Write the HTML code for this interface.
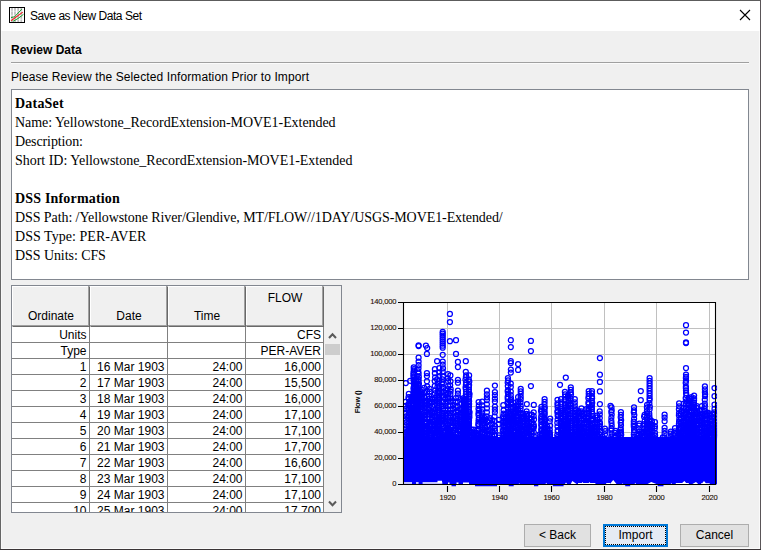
<!DOCTYPE html>
<html><head><meta charset="utf-8"><title>Save as New Data Set</title>
<style>
html,body{margin:0;padding:0;}
body{width:761px;height:550px;overflow:hidden;background:#f0f0f0;position:relative;font-family:"Liberation Sans",sans-serif;font-size:12px;color:#000;}
.abs{position:absolute;}
#win{left:0;top:0;width:761px;height:550px;box-sizing:border-box;}
#bt{left:0;top:0;width:761px;height:1px;background:#5c5c5c;}
#bl{left:0;top:0;width:1px;height:549px;background:#666;}
#wl{left:1px;top:31px;width:1px;height:517px;background:#f8f8f8;}
#wr{left:759px;top:31px;width:1px;height:518px;background:#fafafa;}
#wb{left:1px;top:548px;width:759px;height:1px;background:#fafafa;}
#br{left:760px;top:0;width:1px;height:550px;background:#5a5558;}
#bb{left:0;top:549px;width:761px;height:1px;background:#3a3436;}
#title{left:1px;top:1px;width:759px;height:30px;background:#fff;}
#ttext{left:30px;top:9px;font-size:12px;letter-spacing:-0.46px;line-height:14px;white-space:nowrap;}
#hdr{left:11px;top:43px;font-weight:bold;line-height:14px;white-space:nowrap;}
#sep{left:11px;top:62px;width:738px;height:1px;background:#a0a0a0;border-bottom:1px solid #fbfbfb;}
#sub{left:11px;top:70px;letter-spacing:0.11px;line-height:14px;white-space:nowrap;}
#info{left:11px;top:89px;width:738px;height:191px;box-sizing:border-box;border:1px solid #828790;background:#fff;font-family:"Liberation Serif",serif;font-size:14px;line-height:19px;padding:4px 0 0 3px;white-space:nowrap;}
#info b{font-weight:bold;}
.btn{top:524px;height:23px;box-sizing:border-box;border:1px solid #adadad;background:#e1e1e1;text-align:center;line-height:21px;font-size:12px;}
</style></head><body>
<div id="title" class="abs"></div>
<div id="wl" class="abs"></div><div id="wr" class="abs"></div><div id="wb" class="abs"></div><div id="bt" class="abs"></div><div id="bl" class="abs"></div><div id="br" class="abs"></div><div id="bb" class="abs"></div>
<svg class="abs" style="left:9px;top:7px" width="16" height="16" viewBox="0 0 16 16">
<rect x="0.5" y="0.5" width="15" height="15" fill="#fff" stroke="#000" stroke-width="1"/>
<path d="M3 1v14M6 1v14M9.2 1v14M12.3 1v14" stroke="#bdbdbd" stroke-width="1.7" fill="none"/>
<path d="M1 4.2h14M1 8.3h14M1 12.2h14" stroke="#fff" stroke-opacity="0.65" stroke-width="0.9" fill="none"/>
<path d="M2 10.6 L5.5 9.8 L12.8 2.2" stroke="#1a9a2a" stroke-width="1" fill="none"/>
<path d="M4 14.3 L9 11.5 L14.5 7.3" stroke="#1a9a2a" stroke-width="1" fill="none"/>
<path d="M2 13.8 L13.8 5.1" stroke="#f02020" stroke-width="1.1" fill="none"/>
</svg>
<div id="ttext" class="abs">Save as New Data Set</div>
<svg class="abs" style="left:739px;top:9px" width="12" height="12" viewBox="0 0 12 12"><path d="M1 1L11 11M11 1L1 11" stroke="#000" stroke-width="1.1" fill="none"/></svg>
<div id="hdr" class="abs">Review Data</div>
<div id="sep" class="abs"></div>
<div id="sub" class="abs">Please Review the Selected Information Prior to Import</div>
<div id="info" class="abs"><span style="letter-spacing:0.21px"><b>DataSet</b></span><br><span style="letter-spacing:-0.0625px">Name: Yellowstone_RecordExtension-MOVE1-Extended</span><br><span style="letter-spacing:-0.11px">Description:</span><br><span style="letter-spacing:-0.023px">Short ID: Yellowstone_RecordExtension-MOVE1-Extended</span><br><br><span style="letter-spacing:0.18px"><b>DSS Information</b></span><br><span style="letter-spacing:-0.086px">DSS Path: /Yellowstone River/Glendive, MT/FLOW//1DAY/USGS-MOVE1-Extended/</span><br><span style="letter-spacing:0.04px">DSS Type: PER-AVER</span><br><span style="letter-spacing:-0.07px">DSS Units: CFS</span><br></div>
<div class="abs" id="tbl" style="left:11px;top:285px;width:331px;height:228px;box-sizing:border-box;border:1px solid #828790;background:#f0f0f0;overflow:hidden;">
<div class="abs" style="left:0px;top:0;width:78px;height:41px;box-sizing:border-box;border-top:1px solid #fff;border-left:1px solid #fff;border-right:1px solid #696969;border-bottom:1px solid #696969;background:#f0f0f0;"><div class="abs" style="left:-1px;top:-1px;right:0;bottom:0;border-right:1px solid #a0a0a0;border-bottom:1px solid #a0a0a0;"></div><div class="abs" style="left:0;right:0;top:4px;text-align:center;line-height:14px;"></div><div class="abs" style="left:0;right:0;top:22px;text-align:center;line-height:14px;">Ordinate</div></div>
<div class="abs" style="left:78px;top:0;width:78px;height:41px;box-sizing:border-box;border-top:1px solid #fff;border-left:1px solid #fff;border-right:1px solid #696969;border-bottom:1px solid #696969;background:#f0f0f0;"><div class="abs" style="left:-1px;top:-1px;right:0;bottom:0;border-right:1px solid #a0a0a0;border-bottom:1px solid #a0a0a0;"></div><div class="abs" style="left:0;right:0;top:4px;text-align:center;line-height:14px;"></div><div class="abs" style="left:0;right:0;top:22px;text-align:center;line-height:14px;">Date</div></div>
<div class="abs" style="left:156px;top:0;width:78px;height:41px;box-sizing:border-box;border-top:1px solid #fff;border-left:1px solid #fff;border-right:1px solid #696969;border-bottom:1px solid #696969;background:#f0f0f0;"><div class="abs" style="left:-1px;top:-1px;right:0;bottom:0;border-right:1px solid #a0a0a0;border-bottom:1px solid #a0a0a0;"></div><div class="abs" style="left:0;right:0;top:4px;text-align:center;line-height:14px;"></div><div class="abs" style="left:0;right:0;top:22px;text-align:center;line-height:14px;">Time</div></div>
<div class="abs" style="left:234px;top:0;width:78px;height:41px;box-sizing:border-box;border-top:1px solid #fff;border-left:1px solid #fff;border-right:1px solid #696969;border-bottom:1px solid #696969;background:#f0f0f0;"><div class="abs" style="left:-1px;top:-1px;right:0;bottom:0;border-right:1px solid #a0a0a0;border-bottom:1px solid #a0a0a0;"></div><div class="abs" style="left:0;right:0;top:4px;text-align:center;line-height:14px;">FLOW</div><div class="abs" style="left:0;right:0;top:22px;text-align:center;line-height:14px;"></div></div>
<div class="abs" style="left:0;top:41px;width:312px;height:190px;background:#fff;"></div>
<div class="abs" style="left:0px;top:41px;width:78px;height:16px;box-sizing:border-box;border-right:1px solid #808080;border-bottom:1px solid #808080;text-align:right;padding-right:2.5px;line-height:16px;white-space:nowrap;">Units</div>
<div class="abs" style="left:78px;top:41px;width:78px;height:16px;box-sizing:border-box;border-right:1px solid #808080;border-bottom:1px solid #808080;text-align:right;padding-right:2.5px;line-height:16px;white-space:nowrap;"></div>
<div class="abs" style="left:156px;top:41px;width:78px;height:16px;box-sizing:border-box;border-right:1px solid #808080;border-bottom:1px solid #808080;text-align:right;padding-right:2.5px;line-height:16px;white-space:nowrap;"></div>
<div class="abs" style="left:234px;top:41px;width:78px;height:16px;box-sizing:border-box;border-right:1px solid #808080;border-bottom:1px solid #808080;text-align:right;padding-right:2px;line-height:16px;white-space:nowrap;">CFS</div>
<div class="abs" style="left:0px;top:57px;width:78px;height:16px;box-sizing:border-box;border-right:1px solid #808080;border-bottom:1px solid #808080;text-align:right;padding-right:2.5px;line-height:16px;white-space:nowrap;">Type</div>
<div class="abs" style="left:78px;top:57px;width:78px;height:16px;box-sizing:border-box;border-right:1px solid #808080;border-bottom:1px solid #808080;text-align:right;padding-right:2.5px;line-height:16px;white-space:nowrap;"></div>
<div class="abs" style="left:156px;top:57px;width:78px;height:16px;box-sizing:border-box;border-right:1px solid #808080;border-bottom:1px solid #808080;text-align:right;padding-right:2.5px;line-height:16px;white-space:nowrap;"></div>
<div class="abs" style="left:234px;top:57px;width:78px;height:16px;box-sizing:border-box;border-right:1px solid #808080;border-bottom:1px solid #808080;text-align:right;padding-right:2px;line-height:16px;white-space:nowrap;">PER-AVER</div>
<div class="abs" style="left:0px;top:73px;width:78px;height:16px;box-sizing:border-box;border-right:1px solid #808080;border-bottom:1px solid #808080;text-align:right;padding-right:2.5px;line-height:16px;white-space:nowrap;">1</div>
<div class="abs" style="left:78px;top:73px;width:78px;height:16px;box-sizing:border-box;border-right:1px solid #808080;border-bottom:1px solid #808080;text-align:right;padding-right:2.5px;line-height:16px;white-space:nowrap;">16 Mar 1903</div>
<div class="abs" style="left:156px;top:73px;width:78px;height:16px;box-sizing:border-box;border-right:1px solid #808080;border-bottom:1px solid #808080;text-align:right;padding-right:2.5px;line-height:16px;white-space:nowrap;">24:00</div>
<div class="abs" style="left:234px;top:73px;width:78px;height:16px;box-sizing:border-box;border-right:1px solid #808080;border-bottom:1px solid #808080;text-align:right;padding-right:2px;line-height:16px;white-space:nowrap;">16,000</div>
<div class="abs" style="left:0px;top:89px;width:78px;height:16px;box-sizing:border-box;border-right:1px solid #808080;border-bottom:1px solid #808080;text-align:right;padding-right:2.5px;line-height:16px;white-space:nowrap;">2</div>
<div class="abs" style="left:78px;top:89px;width:78px;height:16px;box-sizing:border-box;border-right:1px solid #808080;border-bottom:1px solid #808080;text-align:right;padding-right:2.5px;line-height:16px;white-space:nowrap;">17 Mar 1903</div>
<div class="abs" style="left:156px;top:89px;width:78px;height:16px;box-sizing:border-box;border-right:1px solid #808080;border-bottom:1px solid #808080;text-align:right;padding-right:2.5px;line-height:16px;white-space:nowrap;">24:00</div>
<div class="abs" style="left:234px;top:89px;width:78px;height:16px;box-sizing:border-box;border-right:1px solid #808080;border-bottom:1px solid #808080;text-align:right;padding-right:2px;line-height:16px;white-space:nowrap;">15,500</div>
<div class="abs" style="left:0px;top:105px;width:78px;height:16px;box-sizing:border-box;border-right:1px solid #808080;border-bottom:1px solid #808080;text-align:right;padding-right:2.5px;line-height:16px;white-space:nowrap;">3</div>
<div class="abs" style="left:78px;top:105px;width:78px;height:16px;box-sizing:border-box;border-right:1px solid #808080;border-bottom:1px solid #808080;text-align:right;padding-right:2.5px;line-height:16px;white-space:nowrap;">18 Mar 1903</div>
<div class="abs" style="left:156px;top:105px;width:78px;height:16px;box-sizing:border-box;border-right:1px solid #808080;border-bottom:1px solid #808080;text-align:right;padding-right:2.5px;line-height:16px;white-space:nowrap;">24:00</div>
<div class="abs" style="left:234px;top:105px;width:78px;height:16px;box-sizing:border-box;border-right:1px solid #808080;border-bottom:1px solid #808080;text-align:right;padding-right:2px;line-height:16px;white-space:nowrap;">16,000</div>
<div class="abs" style="left:0px;top:121px;width:78px;height:16px;box-sizing:border-box;border-right:1px solid #808080;border-bottom:1px solid #808080;text-align:right;padding-right:2.5px;line-height:16px;white-space:nowrap;">4</div>
<div class="abs" style="left:78px;top:121px;width:78px;height:16px;box-sizing:border-box;border-right:1px solid #808080;border-bottom:1px solid #808080;text-align:right;padding-right:2.5px;line-height:16px;white-space:nowrap;">19 Mar 1903</div>
<div class="abs" style="left:156px;top:121px;width:78px;height:16px;box-sizing:border-box;border-right:1px solid #808080;border-bottom:1px solid #808080;text-align:right;padding-right:2.5px;line-height:16px;white-space:nowrap;">24:00</div>
<div class="abs" style="left:234px;top:121px;width:78px;height:16px;box-sizing:border-box;border-right:1px solid #808080;border-bottom:1px solid #808080;text-align:right;padding-right:2px;line-height:16px;white-space:nowrap;">17,100</div>
<div class="abs" style="left:0px;top:137px;width:78px;height:16px;box-sizing:border-box;border-right:1px solid #808080;border-bottom:1px solid #808080;text-align:right;padding-right:2.5px;line-height:16px;white-space:nowrap;">5</div>
<div class="abs" style="left:78px;top:137px;width:78px;height:16px;box-sizing:border-box;border-right:1px solid #808080;border-bottom:1px solid #808080;text-align:right;padding-right:2.5px;line-height:16px;white-space:nowrap;">20 Mar 1903</div>
<div class="abs" style="left:156px;top:137px;width:78px;height:16px;box-sizing:border-box;border-right:1px solid #808080;border-bottom:1px solid #808080;text-align:right;padding-right:2.5px;line-height:16px;white-space:nowrap;">24:00</div>
<div class="abs" style="left:234px;top:137px;width:78px;height:16px;box-sizing:border-box;border-right:1px solid #808080;border-bottom:1px solid #808080;text-align:right;padding-right:2px;line-height:16px;white-space:nowrap;">17,100</div>
<div class="abs" style="left:0px;top:153px;width:78px;height:16px;box-sizing:border-box;border-right:1px solid #808080;border-bottom:1px solid #808080;text-align:right;padding-right:2.5px;line-height:16px;white-space:nowrap;">6</div>
<div class="abs" style="left:78px;top:153px;width:78px;height:16px;box-sizing:border-box;border-right:1px solid #808080;border-bottom:1px solid #808080;text-align:right;padding-right:2.5px;line-height:16px;white-space:nowrap;">21 Mar 1903</div>
<div class="abs" style="left:156px;top:153px;width:78px;height:16px;box-sizing:border-box;border-right:1px solid #808080;border-bottom:1px solid #808080;text-align:right;padding-right:2.5px;line-height:16px;white-space:nowrap;">24:00</div>
<div class="abs" style="left:234px;top:153px;width:78px;height:16px;box-sizing:border-box;border-right:1px solid #808080;border-bottom:1px solid #808080;text-align:right;padding-right:2px;line-height:16px;white-space:nowrap;">17,700</div>
<div class="abs" style="left:0px;top:169px;width:78px;height:16px;box-sizing:border-box;border-right:1px solid #808080;border-bottom:1px solid #808080;text-align:right;padding-right:2.5px;line-height:16px;white-space:nowrap;">7</div>
<div class="abs" style="left:78px;top:169px;width:78px;height:16px;box-sizing:border-box;border-right:1px solid #808080;border-bottom:1px solid #808080;text-align:right;padding-right:2.5px;line-height:16px;white-space:nowrap;">22 Mar 1903</div>
<div class="abs" style="left:156px;top:169px;width:78px;height:16px;box-sizing:border-box;border-right:1px solid #808080;border-bottom:1px solid #808080;text-align:right;padding-right:2.5px;line-height:16px;white-space:nowrap;">24:00</div>
<div class="abs" style="left:234px;top:169px;width:78px;height:16px;box-sizing:border-box;border-right:1px solid #808080;border-bottom:1px solid #808080;text-align:right;padding-right:2px;line-height:16px;white-space:nowrap;">16,600</div>
<div class="abs" style="left:0px;top:185px;width:78px;height:16px;box-sizing:border-box;border-right:1px solid #808080;border-bottom:1px solid #808080;text-align:right;padding-right:2.5px;line-height:16px;white-space:nowrap;">8</div>
<div class="abs" style="left:78px;top:185px;width:78px;height:16px;box-sizing:border-box;border-right:1px solid #808080;border-bottom:1px solid #808080;text-align:right;padding-right:2.5px;line-height:16px;white-space:nowrap;">23 Mar 1903</div>
<div class="abs" style="left:156px;top:185px;width:78px;height:16px;box-sizing:border-box;border-right:1px solid #808080;border-bottom:1px solid #808080;text-align:right;padding-right:2.5px;line-height:16px;white-space:nowrap;">24:00</div>
<div class="abs" style="left:234px;top:185px;width:78px;height:16px;box-sizing:border-box;border-right:1px solid #808080;border-bottom:1px solid #808080;text-align:right;padding-right:2px;line-height:16px;white-space:nowrap;">17,100</div>
<div class="abs" style="left:0px;top:201px;width:78px;height:16px;box-sizing:border-box;border-right:1px solid #808080;border-bottom:1px solid #808080;text-align:right;padding-right:2.5px;line-height:16px;white-space:nowrap;">9</div>
<div class="abs" style="left:78px;top:201px;width:78px;height:16px;box-sizing:border-box;border-right:1px solid #808080;border-bottom:1px solid #808080;text-align:right;padding-right:2.5px;line-height:16px;white-space:nowrap;">24 Mar 1903</div>
<div class="abs" style="left:156px;top:201px;width:78px;height:16px;box-sizing:border-box;border-right:1px solid #808080;border-bottom:1px solid #808080;text-align:right;padding-right:2.5px;line-height:16px;white-space:nowrap;">24:00</div>
<div class="abs" style="left:234px;top:201px;width:78px;height:16px;box-sizing:border-box;border-right:1px solid #808080;border-bottom:1px solid #808080;text-align:right;padding-right:2px;line-height:16px;white-space:nowrap;">17,100</div>
<div class="abs" style="left:0px;top:217px;width:78px;height:16px;box-sizing:border-box;border-right:1px solid #808080;border-bottom:1px solid #808080;text-align:right;padding-right:2.5px;line-height:16px;white-space:nowrap;">10</div>
<div class="abs" style="left:78px;top:217px;width:78px;height:16px;box-sizing:border-box;border-right:1px solid #808080;border-bottom:1px solid #808080;text-align:right;padding-right:2.5px;line-height:16px;white-space:nowrap;">25 Mar 1903</div>
<div class="abs" style="left:156px;top:217px;width:78px;height:16px;box-sizing:border-box;border-right:1px solid #808080;border-bottom:1px solid #808080;text-align:right;padding-right:2.5px;line-height:16px;white-space:nowrap;">24:00</div>
<div class="abs" style="left:234px;top:217px;width:78px;height:16px;box-sizing:border-box;border-right:1px solid #808080;border-bottom:1px solid #808080;text-align:right;padding-right:2px;line-height:16px;white-space:nowrap;">17,700</div>
<div class="abs" style="left:312px;top:41px;width:17px;height:190px;background:#f0f0f0;"></div>
<div class="abs" style="left:313px;top:58px;width:15px;height:11px;background:#cdcdcd;"></div>
<svg class="abs" style="left:312px;top:41px" width="17" height="17" viewBox="0 0 17 17"><path d="M5 11L8.5 7.2L12 11" stroke="#5a5a5a" stroke-width="2" fill="none"/></svg>
<svg class="abs" style="left:312px;top:209px" width="17" height="17" viewBox="0 0 17 17"><path d="M5 6.5L8.5 10.3L12 6.5" stroke="#5a5a5a" stroke-width="2" fill="none"/></svg>
</div>
<svg class="abs" style="left:345px;top:290px" width="410" height="225" viewBox="345 290 410 225" font-family="Liberation Sans, sans-serif">
<defs><marker id="m" markerWidth="6" markerHeight="6" refX="3" refY="3" markerUnits="userSpaceOnUse" overflow="visible"><circle cx="3" cy="3" r="2.5" fill="none" stroke="#0000ff" stroke-width="1.25"/></marker><clipPath id="cp"><rect x="403.5" y="302.5" width="313.6" height="184"/></clipPath></defs>
<rect x="403.5" y="302.5" width="312" height="182" fill="#fff" stroke="none"/>
<path d="M404 328.5H715M404 354.5H715M404 380.5H715M404 406.5H715M404 432.5H715M404 458.5H715M447.5 303V484M499.5 303V484M551.5 303V484M604.5 303V484M656.5 303V484M709.5 303V484" stroke="#c0c0c0" stroke-width="1" fill="none"/>
<g clip-path="url(#cp)">
<rect x="404" y="437" width="313" height="47.3" fill="#0000ff"/>
<path d="M518.8 484L519.2 482.8L519.6 484ZM545.5 484L546.2 482.8L547 484ZM565 484L566 482.6L567.2 484ZM570.8 484L572.3 480.9L576.6 484ZM578 484V482.9H595.4V484ZM581 484L582.5 482L584 484ZM588 484L589.5 482L591 484ZM606.2 484V483.1H610V484ZM610 484L613.2 480.1L616.5 484ZM622.3 484L622.7 483L623.2 484ZM634.6 484L635.3 482.8L636 484ZM647.6 484L651.2 482L656.3 484ZM670.7 484L671.3 482.9L672 484ZM675.8 484V483.1H688.8V484ZM681 484L684.4 480.9L687 484ZM692.4 484L696 482L698.2 484ZM701 484V483.2H709.7V484ZM701.5 484L704 480.9L706.5 484Z" fill="#fff"/>
<path d="M404 482.9H412M416 482.9H418.6M422.6 482.9H442.3M437.5 481.6H442M448 483.2H449.5M456.5 483.2H458.5M463 483.2H469" stroke="#fff" stroke-width="1.5"/>
<polyline points="405.8,383.1 410.2,380.8 413.7,367.3 413.9,369 413.8,370.5 413.5,372.7 413.5,374.5 413.5,376.3 413.8,377.3 413.6,379.8 413.9,381.1 413.8,383.8 414.1,385.5 414,386.5 413.6,387.9 413.7,389.1 413.6,391.5 413.9,393.3 413.8,394.7 413.5,395.6 413.9,396.8 413.7,398.3 413.8,400.1 414,401.4 413.6,403.4 413.8,405.2 413.9,407.5 414.1,408.8 413.8,409.8 413.6,411.8 413.5,413.5 414,415.4 414,417.2 413.9,418.5 413.8,420.3 414,421.9 413.8,424.3 413.5,426.2 413.9,428.2 414,430.7 413.7,432 413.5,433.9 413.6,435.5 413.5,436.5 413.6,438.6 418.6,345.3 418.6,346 418.6,357.7 418.6,361.6 418.6,365.2 418.5,368.3 418.3,371.4 418.6,373.7 418.8,376.9 418.5,379.4 418.5,381.1 418.9,383.7 418.4,384.9 418.4,386.2 418.7,388.1 418.3,389.5 418.5,391.2 418.9,393.1 418.6,395.4 418.7,397.4 418.8,398.3 418.8,400.4 418.5,402.6 418.4,404.1 418.3,406 418.4,406.9 418.5,407.9 418.3,408.8 418.4,409.9 418.3,411.3 418.7,413.6 418.5,414.6 418.5,416 418.8,417 418.6,419.5 418.4,421.2 418.5,422.1 418.8,423.4 418.3,424.5 418.6,426.9 418.6,427.9 418.6,428.8 418.8,431.2 418.5,433.2 418.4,434.6 418.6,436.8 418.5,438.9 425.9,345.6 427.2,348.1 426.9,353.9 426.9,373.2 426.9,376.1 426.9,381.3 427.1,386.3 427.1,391.7 427.1,396.5 426.7,401.1 426.8,404.1 426.6,405.7 426.8,407.9 427.2,411.5 427.2,414.3 427.2,418.7 426.7,421.3 426.7,423.4 427,425.5 427.1,429.7 427,432.6 426.7,436 427.1,439.1 434.9,369.2 434.9,373.2 435.1,377.3 434.7,381.1 434.8,385.8 435.2,390.6 434.8,393.3 435,397.6 434.7,399.6 435.1,401.5 434.7,405.3 435.2,409.3 434.8,412.7 434.7,415.8 435.2,417.3 434.9,420.7 434.9,425 435.1,428.7 434.8,430.5 434.7,432.6 434.8,435.5 434.7,437.9 437.1,361.2 439.3,368.1 439.2,372.3 439.4,376 439.3,381.1 439.3,386.3 439.3,389.4 439.3,390.9 439,392.9 439.1,396.7 439.4,399.6 439.2,402.7 439.3,405.8 439.1,409.6 439.1,412.7 439.5,415 439.3,418 439.5,421.3 439.4,423.8 439.3,426.5 439.3,429.6 439.3,432.4 439.4,436.2 442.7,331.9 442.7,333.7 442.7,335.6 442.7,337.5 442.7,339.5 442.7,341.5 442.7,343.5 442.7,345.7 442.7,347.7 442.7,354.8 442.7,361.6 442.7,364.5 443,368.3 442.7,371.4 442.9,376.6 442.5,379.3 442.4,382.1 442.4,384.3 442.9,387.7 442.5,391.9 442.8,395.5 442.9,397.4 442.5,401.8 442.6,406.1 443,409 442.5,413 442.7,415.8 442.5,418 442.8,420.1 442.7,421.4 442.4,423.9 442.8,426.1 442.4,428.8 442.9,432.7 442.5,436.7 442.4,438.7 449.9,313.9 449.9,322 449.9,341.2 448,374 447.9,378.3 448,381 448.2,386.1 447.8,389.2 448,393.4 447.8,397 448.1,398.6 447.7,401.3 448.1,405.6 447.8,409.5 447.7,413.5 448,417.6 448,420.1 447.9,424.3 448,426.2 447.8,428.1 447.7,429.8 447.9,431.6 448.2,433.8 448,435.8 447.9,437.6 447.9,438.9 450.4,375.4 450.5,381.3 450.2,385.3 450.7,389.1 450.6,391.6 450.4,394.4 450.3,398.4 450.5,401.4 450.3,405.8 450.5,409.8 450.3,413.1 450.1,415.6 450.1,417.5 450.3,421.1 450.2,423.1 450.6,427.1 450.3,430.2 450.3,432.1 450.2,434.7 450.3,437.1 456,340.2 456,353.9 457.9,361.9 457.9,367 457.9,379.8 457.9,382.7 457.9,390.7 457.9,393.6 458.2,397.3 457.7,401.3 457.8,406.6 457.6,410 457.9,412.6 457.7,415.6 457.6,418.5 457.7,420.8 457.6,423.4 457.8,425 458,427.1 458.1,430.1 458,433.6 457.8,437.7 465.8,361.2 465.8,371.8 466.1,375.3 465.9,377 465.5,379.7 466,382.8 465.9,384.8 465.6,387.3 465.8,389.2 466,391.7 465.9,394.1 465.9,396.7 465.6,399 465.6,399.9 465.6,401.5 465.8,404 465.9,406.1 465.8,408 466,408.8 465.8,410.9 465.9,412.6 465.9,413.5 465.5,414.8 465.9,416 465.9,417.2 465.8,419.6 465.8,421.1 466,423 465.9,424.9 465.6,425.8 465.9,427.1 465.8,428.4 465.5,429.2 465.9,430.4 465.9,432.4 465.8,433.7 465.8,435.3 466,436.3 466.1,437.4 469.1,375.4 468.8,379.3 469.3,381.6 469.1,385 468.9,386.9 468.9,389.6 468.9,391.6 469.4,393.5 469.3,394.6 469.3,396.5 468.9,398.7 469.1,401.3 468.8,402.3 469.1,404.1 468.9,405.6 469,407.2 468.8,409.4 469.3,411.5 469.4,412.5 469.3,414.5 469,415.8 469.4,417.2 469,419 469,420.6 468.9,421.5 469,423.7 468.9,426.1 469.1,427.3 469,428.4 469.3,430.9 469.2,433 469.4,435.4 469.2,437.1 469.2,438 478.6,402.1 478.8,405.3 478.5,408.8 478.9,410.7 478.6,412.9 478.5,414.9 478.9,417.9 478.7,419.7 478.6,421.6 478.4,423.8 478.4,425.3 478.6,428.8 478.8,430.5 478.6,434.1 478.4,435.6 478.5,437 478.4,438.3 482.2,401.5 482.2,405.3 482.3,409.4 482.1,412.3 482.1,415.5 481.9,417.5 482.5,419.4 482.2,420.8 482.4,423.6 482.1,425.3 482.1,427.1 482.5,429.3 482.4,432.6 481.9,433.8 482.4,436.7 482.3,439.1 486.9,390.7 486.9,394.3 486.9,397.3 486.9,400.1 486.9,404.3 486.9,408.3 486.9,412.3 486.8,416.3 487.1,421.5 487.2,426.5 486.7,429.5 486.9,431.4 487.2,434.9 487,438.6 494.9,385.6 494.9,392.1 494.9,395 494.9,398.7 494.9,401.6 494.9,406.7 494.9,409.6 494.9,412.3 494.6,416.3 494.7,421 495,426.2 494.7,428.6 495,430.8 494.7,434.4 494.9,436 494.8,439.2" fill="none" stroke="none" marker-start="url(#m)" marker-mid="url(#m)" marker-end="url(#m)"/>
<polyline points="498.9,419.8 498.9,424.1 499,435.3 498.8,437.6 503.3,405.2 503.6,410.3 503.5,413.5 503.1,416.3 503.6,418.6 503.2,421.3 503.3,422.4 503.3,425.1 503.4,426.7 503.1,429.9 503.2,431.1 503.4,433.1 503.5,434.6 503.3,437.4 503.6,439 507.9,378 508.1,380.3 507.7,382.5 507.8,386 507.9,390 507.7,391.5 508,393.5 507.7,396.8 507.7,398.8 507.7,402.1 507.6,403.3 508.1,405.2 508,408.3 508.2,411.7 507.7,413.5 508,416.7 508,417.8 507.8,419.5 507.7,421.1 507.8,422.1 508.2,423.8 508.2,425 507.8,426.4 508.1,429 507.6,430.8 507.8,432.8 507.7,435.6 508.1,437.3 507.8,438.3 510.8,340.2 510.8,347 510.8,361.2 510.8,363 510.8,369.6 510.8,372.5 510.8,383.5 510.8,387.1 510.8,391.5 510.8,395.1 511,398.3 510.5,400.1 511.1,401.9 510.9,404.2 510.7,407.3 511.1,409 510.7,411.5 510.7,414.2 510.5,415.9 511,418.7 511.1,421.3 510.6,422.4 511.1,424.6 510.7,427.8 510.8,429.5 511.1,431.4 511,432.8 511,435.2 510.9,437.8 518.1,364.1 518.1,369.9 518.1,397.2 518,401.3 518.3,403.8 517.9,405.7 517.9,409.2 517.8,410.4 518,412.8 518.3,416.1 518,419.4 517.9,420.7 518.2,422.9 517.9,425 518.2,427 518.2,429.7 518.2,432.7 518.3,434 518.1,435.6 518.2,437.3 517.9,438.7 520.7,388.8 520.7,391.3 520.7,393.8 520.7,396.8 520.7,399.3 520.5,402.3 520.7,406.1 520.6,408.6 520.7,412.6 520.9,414.2 521,416.8 520.7,418.1 520.9,421.1 520.4,424.2 520.5,426 521,427.5 521,429.9 520.9,431.8 520.6,433.9 521,436.8 520.8,438 530.9,340.9 530.9,351 530.9,386 526.8,404.1 526.6,411.3 526.6,413.9 526.7,416 526.9,419.2 526.5,420.7 526.9,422.5 526.7,424 527,425.6 526.5,427.9 526.7,429.2 526.9,431.5 526.6,432.8 526.7,435.5 526.7,437.2 533.8,404.9 533.7,412.3 533.7,416.1 534,419.4 533.7,424.5 533.9,426.5 533.5,428.4 533.8,432.3 533.7,436 541.4,406.8 541.4,409.3 541.1,411 541.5,413.5 541.2,416.7 541.3,418.8 541.2,420.7 541.4,422.1 541.2,424.8 541.6,426.6 541.2,429.4 541.7,430.5 541.4,433.2 541.7,434.2 541.6,435.9 541.6,438 541.6,439 544.6,399 544.6,401.8 544.5,404.3 544.8,407.4 544.4,409.2 544.6,411.4 544.4,413 544.7,414.4 544.3,417 544.8,418.9 544.8,419.9 544.7,421 544.7,423 544.6,424.5 544.6,426.5 544.6,428.6 544.3,430.3 544.6,432.2 544.8,433.4 544.6,435.5 544.6,436.6 544.4,437.6 544.4,439.1 560,384.8 557.5,399.8 557.5,403.3 557.6,405.2 557.6,407.3 557.5,411.1 557.5,412.4 557.8,414.5 557.7,416 557.6,419.6 557.3,422.8 557.5,426.4 557.7,430 557.7,431.5 557.2,435 557.7,437 557.7,438.6 561,399 561.2,402.3 561,404.4 560.8,408.5 561,410.9 560.7,412.7 560.8,414.3 561.1,417.7 560.8,420.9 560.8,423.9 561.1,426.3 561.2,428.3 561,430.7 560.8,433.9 561.1,437.4 564.9,391.9 565.1,394.3 565.2,396.7 564.8,399.9 564.9,403.6 565,405.1 565.1,406.4 565,408.1 565,411.5 564.8,414.2 564.6,415.4 565,416.9 564.9,419 564.7,422.3 565,423.9 564.6,425.1 564.7,426.9 564.7,428.6 565,430.9 565,432.3 564.7,434.3 564.7,437.3 564.7,438.6 565.8,377.6 570.8,387.3 570.8,389.8 570.8,392.3 571,394.3 570.7,398 570.5,400.4 570.8,403.8 570.9,405.7 571.1,407.9 570.6,410.8 570.5,414.1 570.7,416.4 570.5,418.1 570.5,421.1 571.1,423.5 570.6,425 570.8,427.6 571,430.2 570.7,431.6 570.5,433.2 571,436.1 570.5,438.6 574.8,399.1 574.8,402.3 574.8,405.3 574.9,408.3 574.9,411.2 574.6,414.1 574.6,416.1 574.7,417.3 574.9,420.2 574.9,423.4 574.8,425.1 575,427.3 574.7,429.6 575.1,432.3 575,433.9 574.7,435.1 574.9,436.8 581.4,408.3 581.5,411.3 581.6,413.9 581.2,416.4 581.5,420.5 581.5,423.2 581.4,426.7 581.5,429.8 581.4,433 581.4,435.8 581.2,437.7 588.7,391.1 588.7,393.8 588.7,396.3 588.4,398.3 588.5,402.3 588.5,404.1 588.6,408.2 588.4,409.7 588.8,410.9 588.8,413.5 588.4,416.4 588.6,418.9 588.9,422 588.4,425.2 588.9,428.4 588.5,431.8 588.5,433.4 588.9,434.6 588.8,437.3 592,391.1 592,393.3 592,396.5 592.1,398.3 591.8,400.8 592.2,402.8 591.9,405 591.7,407.2 591.9,408.9 591.9,411.7 592.3,413.6 592.2,415.9 591.7,418.5 592,420.6 591.9,423.6 592,426.4 592.2,428 592.2,429.4 591.7,430.7 592.2,432.2 591.7,435.2 592,437.3 599.9,358 599.9,374.7 599.9,381.9 599.9,391.4 599.9,404.1 599.7,411.3 599.8,414.3 599.8,418.1 599.8,422.2 600,423.9 599.7,426.2 599.6,428.8 600,431.8 600,434.8 599.8,436.8 600.1,438.8 610.5,405.9 611.5,407.3 611.7,410.3 611.3,412.1 611.7,414.5 611.4,417.5 611.3,420.7 611.5,423 611.7,425.9 611.4,428.5 611.3,430.4 611.6,433.6 611.3,436.5 611.7,438.6 620.9,412 620.9,414.8 620.7,417.3 621.1,420.2 620.7,422.5 621,425.1 620.7,428.2 620.7,429.7 620.9,431.6 620.8,433.1 621.2,434.7 620.7,437.5 634,407.3 634,410.3 633.8,412.3 634.3,415 634.1,418.7 633.8,421.6 633.8,424.2 633.9,425.8 633.9,427 634.1,430 634.1,432.4 633.8,434.6 633.9,437.1 640.8,391.1 640.8,400.1 647.1,404.8 646.9,407.6 646.9,411.2 647,413.6 647.1,416.8 647.1,419.6 647,422.3 646.8,424.5 646.7,427.1 647.1,429.3" fill="none" stroke="none" marker-start="url(#m)" marker-mid="url(#m)" marker-end="url(#m)"/>
<polyline points="647,432.1 646.9,433.8 647,436 647,438.1 649.6,378 649.6,380.8 649.6,383.3 649.6,385.8 649.6,388.3 649.6,390.8 649.6,393.3 649.6,395.8 649.6,398.3 649.6,400.1 649.4,403.3 649.8,406.7 649.6,409.4 649.3,413.6 649.4,416 649.9,419 649.4,421.3 649.6,423.8 649.6,426.7 649.8,429.3 649.5,431.7 649.4,435.1 649.5,437.8 664.6,414.7 664.6,417.6 664.6,421.2 664.6,427.8 664.6,430.8 664.6,433.6 664.4,437.3 670.8,431.7 670.8,433.6 670.6,436.3 670.9,439.1 675,428 674.9,431.3 674.8,433.7 675.3,437.3 679.1,403.3 679.1,406.3 678.9,409.3 679,413.1 678.9,415.3 679.3,419 679.1,421.7 678.9,424.1 679,427.5 679.3,430.2 679.1,433.2 679.1,435.1 679.3,436.5 679.3,438.5 686,325.2 686,332.5 686,342.4 686,343.1 686,368.1 686,374.7 686,376.9 685.9,378.3 686,380.7 685.7,382.9 685.9,386.5 685.9,388.2 686,390.4 686.1,393.1 686.3,395 685.7,398.2 686.2,401.3 685.8,404.3 686.1,407.4 685.7,408.5 686.1,411.9 685.8,413.6 685.8,414.9 685.9,417.6 686.2,418.9 685.8,421.6 686.1,424.5 686.1,427.2 686.2,430.1 685.8,432.8 686,435.3 686,437.9 694.1,395.6 694.1,398.3 694.1,400.3 693.9,402.8 694.1,405 694.1,407 694.1,408.5 694.1,410.9 693.8,414.2 694.1,417.4 694.2,420 694,423.2 694.4,425.4 694.2,426.8 693.8,429.5 694.2,432.2 694,435.7 694.1,438.9 704.9,386.4 704.9,389.3 704.9,392.3 705.1,394.3 705,396.2 704.8,399.7 704.8,403.7 704.9,406.1 704.7,409.1 704.9,411.4 705.1,413.9 705.1,415.8 704.9,418 704.9,419.8 705,423.4 704.8,426.5 704.8,428.5 705,431.1 704.6,433.9 705.1,436.5 704.6,438.7 714.5,388.1 714.5,396.2 714.5,404.5 714.5,408.9 714.2,412.3 714.8,414.6 714.6,418 714.7,421.9 714.6,424.6 714.6,427.3 714.6,429.9 714.6,431.6 714.7,433.9 714.3,435.3 714.7,436.6 405.6,401.8 405.7,405.9 406.1,408.5 405.8,412.6 405.7,413.8 406,416.4 405.9,419.8 406.1,422.3 405.9,425.4 405.9,428.3 406,429.6 406.2,432.2 405.7,435 406,438.1 408.8,393.8 408.5,397.2 408.7,399.1 408.8,403.5 408.3,405.2 408.4,407.5 408.5,410.1 408.8,413.1 408.7,415.2 408.3,418.1 408.4,421.1 408.6,423.7 408.8,426.5 408.3,429.9 408.3,431.2 408.7,434.2 408.5,436.6 408.6,438.3 407.3,435.5 407.5,438.9 411.3,396.8 411.4,398.5 411.3,400.6 411.1,403.3 411.4,404.9 411.4,407.6 411.1,409.6 411.5,410.6 411.4,412.8 411.2,414.4 411.4,417.1 411.1,419.2 411.4,420.9 411.3,422.5 411.4,424.5 411,426.7 411,427.5 411.2,429 411.4,431.2 411.4,432.1 411.4,434.3 411,436 411.4,438.3 409.8,437.6 412.7,428.2 412.7,430.5 412.3,434.8 412.6,438.2 416.7,376.4 416.1,379 416.4,381.1 416.3,383.6 416.4,384.6 416.3,386.5 416.3,389 416.2,390.9 416.2,392.2 416.3,394.6 416.3,396.6 416.6,399 416.7,400.4 416.6,402.2 416.4,403.8 416.3,404.7 416.3,405.6 416.2,407.4 416.6,408.6 416.5,410.3 416.7,411.5 416.2,412.8 416.5,414.3 416.2,416.2 416.3,418.4 416.3,420.9 416.1,421.7 416.5,423.2 416.6,424.8 416.6,427.1 416.7,429 416.2,431 416.3,432.3 416.7,433.3 416.2,435 416.3,437.2 416.6,438.4 415.4,419.9 415.2,421.9 415.4,423.8 415.1,426.2 415.3,429.2 414.9,431.6 414.8,433.6 415.3,435.2 415.1,437.8 417.7,407.6 417.7,410.5 417.7,413.3 418,417.2 417.7,420.6 417.9,424 417.9,425.6 417.8,426.9 417.9,429 418,432.1 417.7,435.6 417.5,436.8 421.9,389.9 421.7,392.3 421.5,393.9 421.8,395.5 421.4,397.4 421.5,400 421.5,401.6 421.9,403.1 421.5,404.6 421.6,406.4 421.4,409 421.4,411.8 421.8,414.4 421.6,415.7 421.5,417.1 421.6,418.3 422,420.8 421.4,423.1 421.9,424.4 421.8,425.3 421.9,426.6 421.8,427.5 421.4,428.8 421.9,429.6 421.5,431.3 421.9,432.9 421.7,434.1 421.5,435.1 421.8,437.2 421.4,438.3 421.7,439.3 420.2,415 420.5,418.4 420.4,422.4 420.1,424.7 420.3,427.7 420.1,430.6 420.3,433.8 420.6,437.1 424.2,387.9 424.1,392.6 424.1,397 424.6,401 424.4,402.5 424.5,405.7 424.5,408.3 424,412.6 424.1,415.2 424.5,419.1 424.5,422.9 424.5,426.1 424,428.5 424.2,432.1 424.5,433.6 424.1,435.3 424.4,436.8 424.2,438.5 425.9,422.3 425.5,428.3 425.7,434.7 429.6,388.9 429.7,391.5 429.2,396 429.5,398.6 429.4,401.6 429.5,403.4 429.6,405.3 429.3,409.3 429.7,412.5 429.7,414.4 429.5,418.7 429.7,421.5 429.5,424.5 429.7,428.8 429.4,431.3 429.5,433.5 429.7,437.4 432.2,398.9 431.9,402.2 432.1,406.6 432.2,411.6 431.9,413.1 432,415.1 432.2,417.2 432.1,419.3 432.4,421.9 431.9,424.7 432.4,429.2 432.4,430.7 432.4,434.1 432.2,437.4 430.6,422.7 430.5,426.1 430.6,430 430.7,433.4 430.6,435.9 437.1,379.4 437.6,383.5 437.4,387.2 437.6,392.2 437.2,395.4 437.5,399.1 437.4,401.4 437.2,405 437.4,407.6 437.6,410.2 437.4,412.5 437.1,416.4 437.2,418.9 437.7,422 437.6,424.6 437.7,426.4 437.3,428.5 437.6,430.5 437.1,432.4 437.4,433.8 437.3,436.7 436.3,422.8 436.2,427.2 436.4,432.2 436.3,438 438.5,426.1 438.8,429.9 438.9,433.9 438.9,437.2 441.2,438 445.5,390.1 445.5,392.7 445.4,395 445.2,399.1 445.3,403.5 445.4,406.2 445.3,410.3 445.2,412.9 445.4,415.7 445.2,418 445.2,421.2 445.4,423.6" fill="none" stroke="none" marker-start="url(#m)" marker-mid="url(#m)" marker-end="url(#m)"/>
<polyline points="445.2,427.6 445.1,430.4 445,432.8 445.3,435.6 445.5,437.1 445.4,439.3 443.8,437.2 446.3,436.1 446.6,439.2 449.3,436.3 453.1,401.1 453.2,405 453,408.5 453,412.6 453.2,416.9 452.9,420 453,422.6 453.1,425.7 453.4,429.8 453.1,432.7 453.4,436.1 453.1,438.6 451.7,435.9 455.9,398.1 455.5,402 455.8,407.1 456,411.9 455.7,416.1 455.6,418 455.7,421 455.5,423 455.8,426.4 456,428.9 455.4,432.3 455.9,434.9 455.8,437.3 455.6,438.8 460.8,399.1 461,403.8 461.2,408.8 460.7,412.7 461,414.8 461,416.6 460.7,419.6 461.2,421.3 460.9,424.2 461.1,427 461.1,430.4 460.7,433.6 460.8,435.8 461,437.3 463.5,398.1 463.5,400.4 463.8,401.9 463.9,404.5 463.7,406.2 463.3,407.6 463.8,410.3 463.8,411.8 463.5,414.2 463.9,416.2 463.8,418.1 463.5,419.4 463.4,421.7 463.8,423.2 463.8,425 463.4,426.2 463.4,427.6 463.5,430.1 463.3,431.9 463.5,433.6 463.3,435 463.8,436.1 463.4,437.4 463.5,438.6 462.4,432.9 462.1,437.2 464.8,399.8 464.7,403.8 465.1,406.8 464.7,410.7 465,412.7 465.2,414.8 465.2,416.5 464.7,418.9 464.7,421.2 464.8,424.1 465,427.5 464.7,429.6 464.7,432.3 464.7,435.6 464.9,438 467.5,417.5 467.6,421 467.5,423.6 467.3,425.7 467.4,428.9 467.3,431.7 467.4,434.3 467.4,436.7 467.4,438 471.6,429.7 471.4,431.9 471.4,435 471.5,437.6 473.8,429.7 474.2,432.7 474,435 474.2,438 476.9,430.7 476.6,432.8 476.7,435.3 476.8,437.7 484.5,418 484.4,419.9 484.3,423.4 484.6,427.4 484.4,430.3 484.7,432.6 484.2,434.6 484.7,437.9 483.5,438.1 489.9,418 489.7,420.4 489.7,425.1 489.7,430.2 490.1,434 489.6,437.3 492.4,420 492.4,423.3 492.6,427.8 492.4,432 492.2,435.5 492.6,439 505.5,414.4 505.6,418.4 505.3,421.4 505.4,423.2 505.3,425.2 505.3,427 505.6,429.7 505.3,431.3 505.5,433.6 505.4,436.8 505.7,438.6 513.3,407.4 513.5,411.3 513.6,413.4 513.3,417.1 513.5,418.6 513.4,419.7 513.6,420.9 513.1,422.7 513.6,424.5 513.3,425.9 513.2,428.3 513.1,430.7 513.6,432.8 513.5,435 513.5,436.8 513.4,438.3 512.2,435.1 512,438.3 515.9,402.4 516.1,405.6 516.1,408.9 516.1,410.8 515.9,411.9 515.9,413.3 516,416.6 516.1,419.7 516.1,421 516.1,422.8 516.1,424.8 515.8,426.7 516.2,428.1 515.8,431 515.7,432.3 516.2,434.9 515.9,437.8 515.8,438.9 520,438.1 523.6,413.7 524.1,416.4 523.6,418.3 523.7,421.1 523.5,423.8 524.1,426.8 523.8,429.7 523.9,431.4 523.8,433.7 523.8,435.5 524,438.1 522.4,437 529.1,414.7 529.1,418.2 529,421.9 529.2,425.6 529,427.4 528.8,430.4 529.2,434.1 529.2,436.4 531.7,414.7 531.6,418.7 531.9,421.9 531.5,424.1 531.7,427.3 531.8,428.9 531.7,431.3 531.7,433.9 531.6,436.8 531.5,438.5 539.6,434.4 539.7,437.1 547.2,426.5 547.5,428.9 547.4,430.5 547.4,432 547.5,434.6 547.6,436.8 547.7,437.9 550.2,418.5 549.8,421.3 550.1,425.7 549.8,429.5 549.8,432.6 550,434.3 550.1,435.5 549.9,437.2 559.1,438.5 563,410.6 563.2,414.3 562.9,418.1 563.3,420.8 563.3,424.1 563.2,425.4 563.2,426.7 562.9,429.8 563.2,433.1 563,434.8 563.3,437 561.6,422.6 562,425.2 561.9,428.1 562,431.3 561.6,433.9 561.9,438.1 568.1,395.3 568.2,397.9 568.6,400.9 568.1,404.7 568.6,406.2 568.3,409 568.2,411.2 568.3,414.3 568.4,417.5 568.3,418.8 568.6,420.5 568.1,423 568.3,424.5 568.4,426.8 568.3,428.8 568.4,429.8 568.1,431.5 568.7,433.5 568.2,434.6 568.2,437 568.4,438.6 567.1,427.1 567.4,432.5 567.1,434.9 569.9,435 572.2,436.1 572.5,439.3 576.3,410 576.4,412.5 576.2,416.1 576.2,419.4 576.2,421.9 576.1,423.1 576.5,425 576.2,427.3 576.1,429 576,431 576.5,432.1 576.2,434.3 576.1,436.8 576,438.3 575.1,437 578.6,411 579.1,413.2 578.7,416.4 578.8,419.1 579,422.5 579.1,425.3 578.8,428.5 579.1,430 579,432.4 578.7,435 578.6,436.2 579.1,438.4 580,431.6 580,434 579.9,436.5 584,414 583.9,416.1 584.3,419.2 584.4,422.5 584,424.2 584.2,427.1 584.2,429.2 583.8,431.1 583.8,433.2 584,435.8 584.2,438.1 586.4,409 586.8,413.1 586.5,417.3 586.9,420.6 586.5,422.5 586.5,424 586.5,426.9 586.7,430 586.8,432.4 586.8,434.8 586.6,437.4 585.5,435.7 590.8,419.6 590.6,425.1 590.7,428.3 590.4,433.6 590.6,435.1 590.8,438.6 594.4,423.6 594.3,427.2 594.4,429.1 594.6,431 594.4,433.4 594.5,436.8 594.4,438.2 597,415.6 597.4,417.4 597.5,419.8 597.3,422.8 597.4,424.7 597.1,426.9 597,430.2 596.9,433.1 597.1,435.7 596.9,438.9 602.5,436.7 602.3,439 604.9,428.7 605.2,431 604.9,434.3 604.9,438.6 615.4,430.9 615.2,432.9 615.4,436.8 618,433.9 618.3,435.8 636.3,434.6 636.2,438.8 639.3,423.6 638.9,425.6 638.9,429.1 639.4,431.6 639.3,434.5 638.8,437.9 641.4,431.6 641.8,433.7 641.9,436.9 644.6,414.9 644.1,416.8 644.6,421 644.1,424 644.4,425.7 644.4,428.3 644.4,431.8 644.6,434.9 644.6,436.2 648.4,425.8 648.2,428.1 648.1,433.5 648.5,436 651.9,421.2 652.3,424.7 652.2,427.8 652.5,431.3 652.4,434.5 652.1,436.5 652.5,438.7 655,422.2 654.9,426.2 654.8,428.5 655,432.8 655.1,435.6 654.9,438.7 662.8,437.4 673.3,434.6" fill="none" stroke="none" marker-start="url(#m)" marker-mid="url(#m)" marker-end="url(#m)"/>
<polyline points="673.2,438.5 681.3,411.7 680.8,414.3 680.9,418.5 681.2,421.9 681.2,423.2 681.3,425.9 680.9,428.9 681.3,432 681.1,433.9 681.3,436.4 681.2,437.7 679.5,429 679.8,432.5 679.8,435.3 680,438.1 683.8,403.7 683.6,407.7 683.9,410.4 683.6,413.2 683.6,416 683.8,418 683.5,420.4 683.5,423 683.6,424.9 683.7,426.3 683.5,429.1 683.4,431.5 683.7,432.9 683.7,435.6 683.8,438 682.1,438.2 684.9,439.1 688.8,398 688.9,400.4 688.9,403.5 688.7,405.4 688.8,408.8 689.2,411.8 688.8,414.7 689.1,415.9 688.9,419.3 688.8,421.9 689.1,423.6 689,425 689.1,428.4 688.6,431 689.1,432.6 688.9,433.7 688.8,435.6 689,438.6 687.6,418.8 687.7,424.1 687.9,427.8 687.3,430.7 687.4,433.3 687.3,437.1 691.5,397 691.6,398.9 691.7,402.2 691.3,406 691.3,407.7 691.3,410.9 691.7,412.3 691.3,414.9 691.6,417.7 691.3,420.1 691.5,423 691.8,425.6 691.7,428.8 691.4,430.3 691.2,432.7 691.4,436 691.4,437.6 691.7,439.2 690.2,429.3 690.1,431.8 690.4,437.1 692.7,422.7 692.9,425.2 692.8,428.9 692.9,432.9 693,435.6 693.1,437.7 696.9,406.1 696.5,407.9 697,412.2 696.6,414.1 696.6,416.4 697,418.1 696.7,420.8 696.6,423.7 696.6,425.4 696.5,428.7 697,430.2 696.8,433.4 696.9,434.6 696.6,437.6 696.9,439.3 699.6,411.1 699.6,413.3 699.1,415.7 699.6,417.7 699.3,421.2 699.2,424 699.5,427.4 699.1,429 699.1,431.9 699.3,435.1 699.4,436.9 699.4,438.8 701.9,406.1 701.8,410.1 702.3,414 701.7,416.8 702.1,419 702,420.7 702,422.1 702,425 701.8,427.9 701.8,431.1 702.3,434.6 702,438 700.9,435.1 701,439.2 703.5,438.7 707.4,412.6 707.2,414.9 707.4,418.8 707.3,422.9 707.3,424.8 706.9,426.3 707,427.9 707,429.8 707.2,431.9 707.2,433.8 707.4,435.3 707.4,438.4 709.6,413.4 709.8,415.6 709.6,417.6 709.8,420.9 709.8,423.8 709.6,427 710,430 710,432 709.6,433.4 710.1,436.2 709.7,438.1 712.5,414.4 712.3,417.6 712.3,420.6 712.5,423.9 712.3,425.9 712.3,428.1 712.3,429.6 712.5,432.9 712.2,436.3" fill="none" stroke="none" marker-start="url(#m)" marker-mid="url(#m)" marker-end="url(#m)"/>
</g>
<path d="M451.5 485.6H456M475 485.6H497M508.7 485.6H513.7M534 485.6H538.3M552.8 485.6H563.6M625.2 485.6H630.2M657.7 485.6H663.5" stroke="#0000ff" stroke-width="1.2"/>
<path d="M403.5 302.5H715.5V484.5H403.5Z" stroke="#000" stroke-width="1.1" fill="none"/>
<path d="M398 302.5H403M398 328.5H403M398 354.5H403M398 380.5H403M398 406.5H403M398 432.5H403M398 458.5H403M398 484.5H403M447.5 486V492M499.5 486V492M551.5 486V492M604.5 486V492M656.5 486V492M709.5 486V492" stroke="#000" stroke-width="1.1" fill="none"/>
<text x="396.4" y="304.3" font-size="7.6" letter-spacing="-0.17" text-anchor="end" fill="#1a0a00" stroke="#1a0a00" stroke-width="0.1">140,000</text>
<text x="396.4" y="330.3" font-size="7.6" letter-spacing="-0.17" text-anchor="end" fill="#1a0a00" stroke="#1a0a00" stroke-width="0.1">120,000</text>
<text x="396.4" y="356.3" font-size="7.6" letter-spacing="-0.17" text-anchor="end" fill="#1a0a00" stroke="#1a0a00" stroke-width="0.1">100,000</text>
<text x="396.4" y="382.3" font-size="7.6" letter-spacing="-0.17" text-anchor="end" fill="#1a0a00" stroke="#1a0a00" stroke-width="0.1">80,000</text>
<text x="396.4" y="408.3" font-size="7.6" letter-spacing="-0.17" text-anchor="end" fill="#1a0a00" stroke="#1a0a00" stroke-width="0.1">60,000</text>
<text x="396.4" y="434.3" font-size="7.6" letter-spacing="-0.17" text-anchor="end" fill="#1a0a00" stroke="#1a0a00" stroke-width="0.1">40,000</text>
<text x="396.4" y="460.3" font-size="7.6" letter-spacing="-0.17" text-anchor="end" fill="#1a0a00" stroke="#1a0a00" stroke-width="0.1">20,000</text>
<text x="396.4" y="486.3" font-size="7.6" letter-spacing="-0.17" text-anchor="end" fill="#1a0a00" stroke="#1a0a00" stroke-width="0.1">0</text>
<text x="447.5" y="500" font-size="7.6" letter-spacing="-0.17" text-anchor="middle" fill="#1a0a00" stroke="#1a0a00" stroke-width="0.1">1920</text>
<text x="499.5" y="500" font-size="7.6" letter-spacing="-0.17" text-anchor="middle" fill="#1a0a00" stroke="#1a0a00" stroke-width="0.1">1940</text>
<text x="551.5" y="500" font-size="7.6" letter-spacing="-0.17" text-anchor="middle" fill="#1a0a00" stroke="#1a0a00" stroke-width="0.1">1960</text>
<text x="604.5" y="500" font-size="7.6" letter-spacing="-0.17" text-anchor="middle" fill="#1a0a00" stroke="#1a0a00" stroke-width="0.1">1980</text>
<text x="656.5" y="500" font-size="7.6" letter-spacing="-0.17" text-anchor="middle" fill="#1a0a00" stroke="#1a0a00" stroke-width="0.1">2000</text>
<text x="709.5" y="500" font-size="7.6" letter-spacing="-0.17" text-anchor="middle" fill="#1a0a00" stroke="#1a0a00" stroke-width="0.1">2020</text>
<text transform="translate(360,401.8) rotate(-90)" font-size="7.5" letter-spacing="-0.2" font-weight="bold" text-anchor="middle" fill="#000">Flow ()</text>
</svg>
<div class="abs btn" style="left:524px;width:67px;">&lt; Back</div>
<div class="abs btn" style="left:603px;width:65px;border:2px solid #0078d7;line-height:19px;background:#e5ebf4;"><div class="abs" style="left:0;top:0;right:0;bottom:0;border:1px dotted #000;"></div>Import</div>
<div class="abs btn" style="left:680px;width:69px;">Cancel</div>
</body></html>
